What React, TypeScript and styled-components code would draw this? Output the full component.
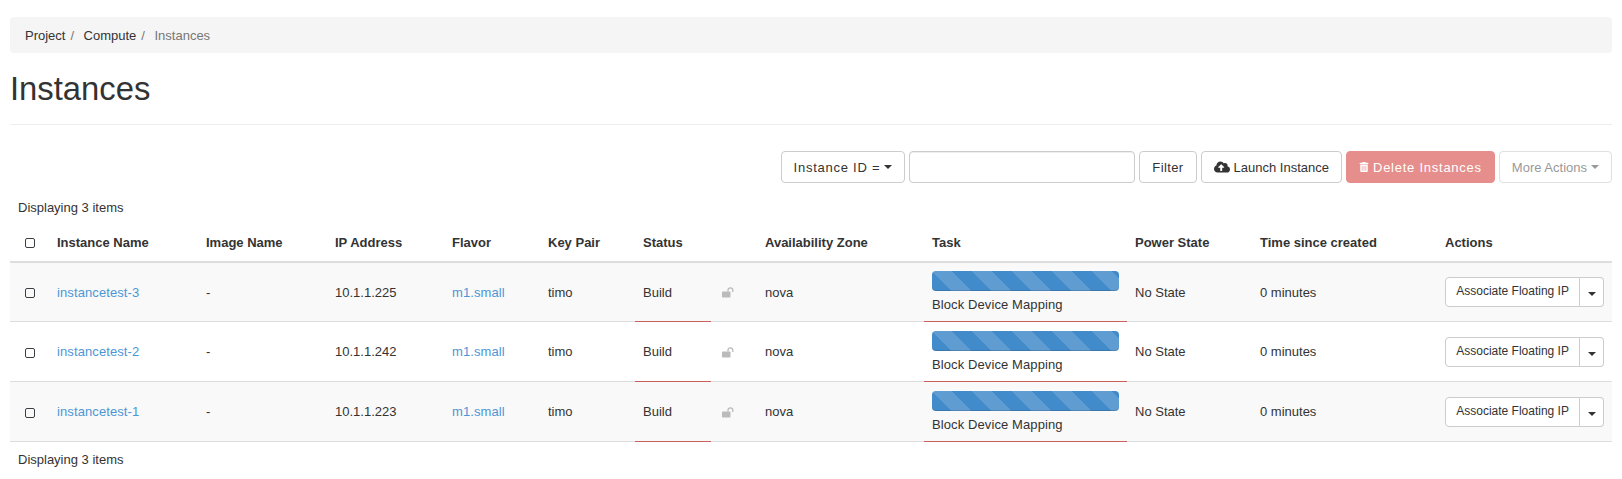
import React from 'react';
import styled, { createGlobalStyle } from 'styled-components';
import { FaCloudUploadAlt, FaTrashAlt } from 'react-icons/fa';

const GlobalStyle = createGlobalStyle`
  html, body {
    margin: 0;
    background: #fff;
    font-family: 'Liberation Sans', Arial, sans-serif;
    font-size: 13px;
    line-height: 18.57px;
    color: #333;
  }
`;

const Page = styled.div`
  padding: 17px 10px 0;
`;

const Breadcrumb = styled.ol`
  display: flex;
  list-style: none;
  height: 36px;
  align-items: center;
  margin: 0;
  padding: 2px 15px 0;
  box-sizing: border-box;
  background: #f5f5f5;
  border-radius: 4px;
`;

const Crumb = styled.li<{ $active?: boolean }>`
  color: ${p => (p.$active ? '#777' : '#333')};
  &:not(:first-child)::before {
    content: '/';
    color: #777;
    padding: 0 9.5px 0 5px;
  }
`;

const PageHeader = styled.div`
  margin-top: 18px;
  padding-bottom: 17px;
  border-bottom: 1px solid #eee;
`;

const Title = styled.h1`
  margin: 0;
  font-size: 32.8px;
  font-weight: 400;
  line-height: 36px;
  color: #333;
`;

const Toolbar = styled.div`
  display: flex;
  justify-content: flex-end;
  gap: 4px;
  margin-top: 26px;
`;

const Button = styled.button<{ $danger?: boolean; $muted?: boolean; $spacing?: number }>`
  display: inline-flex;
  align-items: center;
  gap: 4px;
  height: 32px;
  padding: 0 12px;
  font: 13px 'Liberation Sans', Arial, sans-serif;
  letter-spacing: ${p => p.$spacing ?? 0}px;
  border-radius: 4px;
  border: 1px solid ${p => (p.$danger ? '#e58e8b' : p.$muted ? '#e0e0e0' : '#ccc')};
  background: ${p => (p.$danger ? '#e58e8b' : '#fff')};
  color: ${p => (p.$danger ? '#fff' : p.$muted ? '#999' : '#333')};
`;

const FilterInput = styled.input`
  width: 226px;
  height: 32px;
  box-sizing: border-box;
  border: 1px solid #ccc;
  border-radius: 4px;
  box-shadow: inset 0 1px 1px rgba(0, 0, 0, 0.075);
`;

const Caret = styled.span`
  display: inline-block;
  width: 0;
  height: 0;
  border-top: 4px solid currentColor;
  border-left: 4px solid transparent;
  border-right: 4px solid transparent;
`;

const Summary = styled.div`
  padding: 0 8px;
  margin-top: 16px;
`;

const FooterSummary = styled(Summary)`
  margin-top: 9px;
`;

const Table = styled.table`
  width: 100%;
  table-layout: fixed;
  border-collapse: collapse;
  margin-top: 6px;
`;

const HeadCell = styled.th`
  height: 38px;
  padding: 2px 8px 0;
  box-sizing: border-box;
  text-align: left;
  font-weight: 700;
  border-bottom: 2px solid #ddd;
`;

const Row = styled.tr<{ $striped?: boolean }>`
  background: ${p => (p.$striped ? '#f9f9f9' : '#fff')};
`;

const Cell = styled.td<{ $building?: boolean }>`
  height: 60px;
  padding: 2px 8px 0;
  box-sizing: border-box;
  border-bottom: 1px solid ${p => (p.$building ? '#c9605c' : '#ddd')};
`;

const ActionCell = styled(Cell)`
  padding-top: 0;
`;

const TaskCell = styled(Cell)`
  letter-spacing: 0.1px;
`;

const Check = styled.span`
  display: block;
  box-sizing: border-box;
  width: 10px;
  height: 10px;
  margin-left: 7px;
  border: 1px solid #3a3f47;
  border-radius: 2px;
`;

const NameLink = styled.a`
  color: #4d96d6;
  text-decoration: none;
  letter-spacing: 0.1px;
`;

const LockSvg = styled.svg`
  display: block;
  margin-left: 3px;
`;

const Progress = styled.div`
  height: 20px;
  margin-bottom: 5px;
  border-radius: 4px;
  background-color: #428bca;
  box-shadow: inset 0 -1px 0 rgba(0, 0, 0, 0.15);
  background-image: linear-gradient(
    45deg,
    rgba(255, 255, 255, 0.15) 25%,
    transparent 25%,
    transparent 50%,
    rgba(255, 255, 255, 0.15) 50%,
    rgba(255, 255, 255, 0.15) 75%,
    transparent 75%,
    transparent
  );
  background-size: 40px 40px;
`;

const SplitGroup = styled.div`
  display: flex;
  height: 30px;
  font-size: 12px;
`;

const ActionMain = styled.button`
  width: 136px;
  padding: 0 0 2px;
  font: 12px 'Liberation Sans', Arial, sans-serif;
  color: #333;
  background: #fff;
  border: 1px solid #ccc;
  border-radius: 4px 0 0 4px;
`;

const ActionCaret = styled.button`
  width: 24px;
  padding: 0;
  color: #333;
  background: #fff;
  border: 1px solid #ccc;
  border-left: 0;
  border-radius: 0 4px 4px 0;
`;

const widths = [39, 149, 129, 117, 96, 95, 76, 46, 167, 203, 125, 185, 175];
const headers = ['', 'Instance Name', 'Image Name', 'IP Address', 'Flavor', 'Key Pair', 'Status', '', 'Availability Zone', 'Task', 'Power State', 'Time since created', 'Actions'];
const rows = [
  { name: 'instancetest-3', ip: '10.1.1.225' },
  { name: 'instancetest-2', ip: '10.1.1.242' },
  { name: 'instancetest-1', ip: '10.1.1.223' },
];

function OpenLock() {
  return (
    <LockSvg width="13" height="11" viewBox="0 0 13 11">
      <rect x="0" y="4.5" width="8.5" height="6" rx="0.8" fill="#bbb" />
      <path d="M6 4.5V3.2a2.4 2.4 0 0 1 4.8 0V5" fill="none" stroke="#bbb" strokeWidth="1.3" />
    </LockSvg>
  );
}

export default function App() {
  return (
    <Page>
      <GlobalStyle />
      <Breadcrumb>
        <Crumb>Project</Crumb>
        <Crumb>Compute</Crumb>
        <Crumb $active>Instances</Crumb>
      </Breadcrumb>
      <PageHeader>
        <Title>Instances</Title>
      </PageHeader>
      <Toolbar>
        <Button $spacing={0.75}>Instance ID = <Caret /></Button>
        <FilterInput />
        <Button $spacing={0.4}>Filter</Button>
        <Button><FaCloudUploadAlt size={16} /> Launch Instance</Button>
        <Button $danger $spacing={0.75}><FaTrashAlt size={10} /> Delete Instances</Button>
        <Button $muted>More Actions <Caret /></Button>
      </Toolbar>
      <Summary>Displaying 3 items</Summary>
      <Table>
        <colgroup>
          {widths.map((w, i) => <col key={i} width={w} />)}
        </colgroup>
        <thead>
          <tr>
            {headers.map((h, i) => (
              <HeadCell key={i}>{i === 0 ? <Check /> : h}</HeadCell>
            ))}
          </tr>
        </thead>
        <tbody>
          {rows.map((r, i) => (
            <Row key={r.name} $striped={i % 2 === 0}>
              <Cell><Check /></Cell>
              <Cell><NameLink href="#">{r.name}</NameLink></Cell>
              <Cell>-</Cell>
              <Cell>{r.ip}</Cell>
              <Cell><NameLink href="#">m1.small</NameLink></Cell>
              <Cell>timo</Cell>
              <Cell $building>Build</Cell>
              <Cell><OpenLock /></Cell>
              <Cell>nova</Cell>
              <TaskCell $building>
                <Progress />
                Block Device Mapping
              </TaskCell>
              <Cell>No State</Cell>
              <Cell>0 minutes</Cell>
              <ActionCell>
                <SplitGroup>
                  <ActionMain>Associate Floating IP</ActionMain>
                  <ActionCaret><Caret /></ActionCaret>
                </SplitGroup>
              </ActionCell>
            </Row>
          ))}
        </tbody>
      </Table>
      <FooterSummary>Displaying 3 items</FooterSummary>
    </Page>
  );
}
